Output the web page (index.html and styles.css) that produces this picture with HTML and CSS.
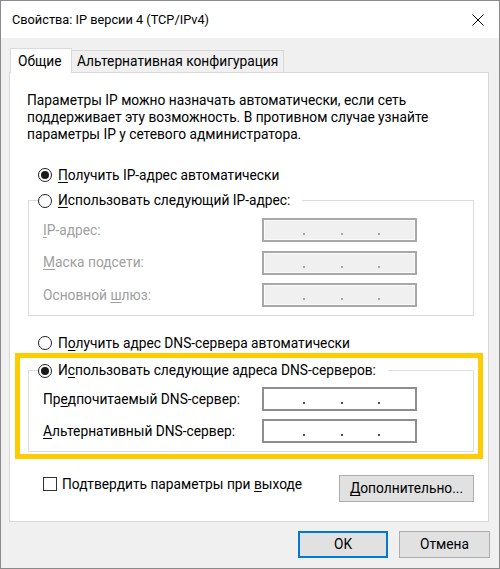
FILE: index.html
```
<!DOCTYPE html>
<html lang="ru">
<head>
<meta charset="utf-8">
<title>Свойства: IP версии 4 (TCP/IPv4)</title>
<link rel="stylesheet" href="styles.css">
</head>
<body>
<div class="window">
  <div class="titlebar">
    <span class="title">Свойства: IP версии 4 (TCP/IPv4)</span>
    <svg class="close" viewBox="0 0 12 12" width="12" height="12"><path d="M0.5 0.5 L11.5 11.5 M11.5 0.5 L0.5 11.5" stroke="#000" stroke-width="1" fill="none"/></svg>
  </div>
  <div class="client">
    <div class="tabs">
      <div class="tab active">Общие</div>
      <div class="tab">Альтернативная конфигурация</div>
    </div>
    <div class="panel">
      <p class="desc">Параметры IP можно назначать автоматически, если сеть<br>поддерживает эту возможность. В противном случае узнайте<br>параметры IP у сетевого администратора.</p>

      <div class="radio-row first"><span class="radio checked"></span><span><u>П</u>олучить IP-адрес автоматически</span></div>

      <div class="group ip-group">
        <div class="group-head"><span class="radio"></span><span><u>И</u>спользовать следующий IP-адрес:</span></div>
        <div class="rows">
          <div class="row disabled"><span class="label"><u>I</u>P-адрес:</span><div class="field"><i class="dot"></i><i class="dot"></i><i class="dot"></i></div></div>
          <div class="row disabled"><span class="label"><u>М</u>аска подсети:</span><div class="field"><i class="dot"></i><i class="dot"></i><i class="dot"></i></div></div>
          <div class="row disabled"><span class="label">Основной <u>ш</u>люз:</span><div class="field"><i class="dot"></i><i class="dot"></i><i class="dot"></i></div></div>
        </div>
      </div>

      <div class="radio-row third"><span class="radio"></span><span>П<u>о</u>лучить адрес DNS-сервера автоматически</span></div>

      <div class="group dns-group">
        <div class="group-head"><span class="radio checked"></span><span>И<u>с</u>пользовать следующие адреса DNS-серверов:</span></div>
        <div class="rows">
          <div class="row"><span class="label">Пр<u>е</u>дпочитаемый DNS-сервер:</span><div class="field"><i class="dot"></i><i class="dot"></i><i class="dot"></i></div></div>
          <div class="row"><span class="label"><u>А</u>льтернативный DNS-сервер:</span><div class="field"><i class="dot"></i><i class="dot"></i><i class="dot"></i></div></div>
        </div>
      </div>

      <div class="bottom-row">
        <div class="check-row"><span class="checkbox"></span><span>Подтвердить параметры при <u>в</u>ыходе</span></div>
        <button class="btn advanced"><u>Д</u>ополнительно...</button>
      </div>

      <div class="highlight"></div>
    </div>
    <div class="buttons">
      <button class="btn ok">OK</button>
      <button class="btn">Отмена</button>
    </div>
  </div>
</div>
</body>
</html>
```
FILE: styles.css
```
* { box-sizing: border-box; }
html, body { margin: 0; padding: 0; background: #fff; }
body {
  font-family: Roboto, "Noto Sans", "DejaVu Sans", sans-serif;
  font-size: 13.75px;
  line-height: 17px;
  color: #000;
}
u { text-decoration-thickness: 1px; text-underline-offset: 2px; }

.window {
  width: 500px;
  height: 569px;
  border: 1px solid #8a8a8a;
  background: #f0f0f0;
  display: flex;
  flex-direction: column;
}
.titlebar {
  height: 37px;
  flex: none;
  background: #fff;
  display: flex;
  align-items: center;
  justify-content: space-between;
  padding: 0 15px 0 11px;
}
.title { font-size: 12.75px; }
.close { display: block; }

.client {
  flex: 1;
  padding: 10px 8px 0 8px;
  display: flex;
  flex-direction: column;
}

.tabs {
  display: flex;
  align-items: flex-end;
  height: 25px;
  padding-left: 1px;
  margin-bottom: -1px;
  position: relative;
  z-index: 1;
}
.tab {
  width: 212px;
  height: 22px;
  margin-bottom: 1px;
  display: flex;
  align-items: center;
  padding: 0 0 0 5px;
  border: 1px solid #d9d9d9;
  border-bottom: none;
  border-left: none;
  background: #f0f0f0;
  white-space: nowrap;
}
.tab.active {
  width: 62px;
  height: 25px;
  margin-bottom: 0;
  background: #fff;
  border-left: 1px solid #d9d9d9;
  padding: 0 0 0 7px;
}

.panel {
  width: 480px;
  height: 450px;
  background: #fff;
  border: 1px solid #d9d9d9;
  padding: 19px 14px 0 17px;
  position: relative;
  display: flex;
  flex-direction: column;
}
.desc {
  margin: 0;
  line-height: 17px;
  white-space: nowrap;
}

.radio-row, .group-head, .check-row {
  display: flex;
  align-items: center;
  white-space: nowrap;
}
.radio-row { margin-left: 11px; }
.radio-row.first { margin-top: 23.5px; }
.radio-row.third { margin-top: 18.5px; }

.radio {
  width: 14px;
  height: 14px;
  border: 1px solid #222;
  border-radius: 50%;
  background: #fff;
  margin-right: 6px;
  flex: none;
  display: flex;
  align-items: center;
  justify-content: center;
}
.radio.checked::after {
  content: "";
  width: 8px;
  height: 8px;
  border-radius: 50%;
  background: #1a1a1a;
}

.group {
  margin-left: 1px;
  border: 1px solid #dcdcdc;
  padding: 0 56px 8px 14px;
  display: flex;
  flex-direction: column;
}
.ip-group { margin-top: 16.5px; }
.dns-group { margin-top: 18.5px; }
.group-head {
  margin: -9px 0 0 -5px;
  align-self: flex-start;
  background: #fff;
  padding-right: 12px;
}
.rows {
  display: flex;
  flex-direction: column;
  gap: 8.5px;
  margin-top: 9px;
}
.dns-group .rows { margin-top: 8px; gap: 8px; }
.row {
  display: flex;
  align-items: center;
  justify-content: space-between;
  height: 24px;
  white-space: nowrap;
}
.row.disabled .label { color: #a0a0a0; }
.field {
  width: 155px;
  height: 24px;
  border: 2px solid #8e8e8e;
  background: #fff;
  display: flex;
  align-items: flex-start;
  gap: 35.5px;
  padding: 13px 0 0 39px;
}
.disabled .field {
  border-color: #a8a8a8;
  background: #f0f0f0;
  box-shadow: inset 0 0 0 1px #fafafa;
}
.dot {
  display: block;
  width: 2px;
  height: 2px;
  background: #4e4e5e;
}
.disabled .dot { background: #a4a4a4; }

.bottom-row {
  margin-top: 23px;
  display: flex;
  align-items: flex-start;
  justify-content: space-between;
  padding-left: 16px;
}
.check-row { height: 17px; margin-top: 0.5px; }
.checkbox {
  width: 14px;
  height: 14px;
  border: 1px solid #333;
  background: #fff;
  margin-right: 5px;
  flex: none;
}

.btn {
  font: inherit;
  color: #000;
  background: #e1e1e1;
  border: 1px solid #adadad;
  height: 27px;
  padding: 0;
  margin: 0;
}
.advanced { width: 135px; }

.buttons {
  margin-top: 9px;
  width: 481px;
  display: flex;
  justify-content: flex-end;
  gap: 11px;
}
.buttons .btn { width: 91px; }
.buttons .btn.ok { width: 90px; border: 2px solid #0078d7; }

.highlight {
  position: absolute;
  left: 5px;
  top: 280px;
  width: 468px;
  height: 106px;
  border: 5px solid #ffcc00;
  pointer-events: none;
}
```
